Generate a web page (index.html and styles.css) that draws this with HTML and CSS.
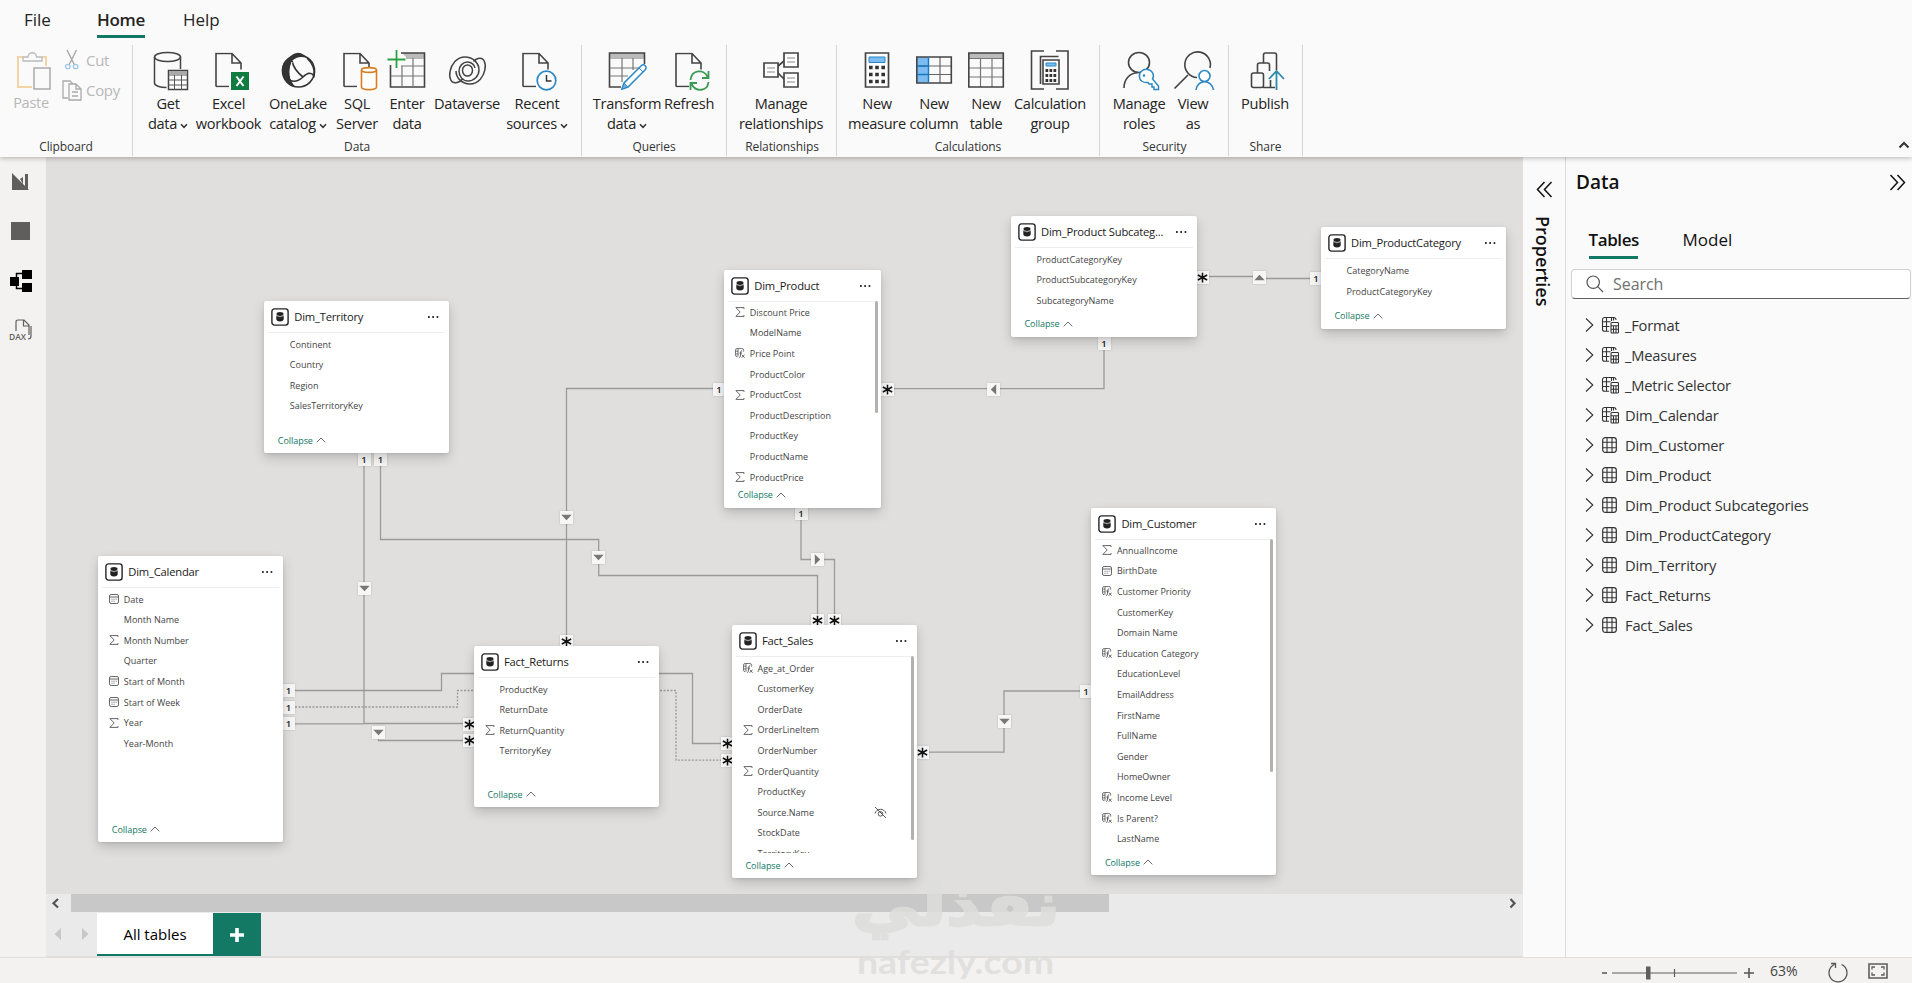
FILE: index.html
```html
<!DOCTYPE html>
<html lang="en">
<head>
<meta charset="utf-8">
<title>Model view</title>
<link rel="stylesheet" href="styles.css">
</head>
<body>
<svg class="defs" width="0" height="0">
  <symbol id="sum" viewBox="0 0 10 10"><path d="M9 2V.6H.9L5.2 5 .9 9.4H9V8" fill="none" stroke="#555" stroke-width=".9"/></symbol>
  <symbol id="cal" viewBox="0 0 10 10"><rect x=".5" y=".5" width="9" height="9" rx="1.6" fill="none" stroke="#555" stroke-width=".9"/><path d="M.5 3h9M2.5 5.2h1M4.6 5.2h1M6.7 5.2h1M2.5 7.2h1M4.6 7.2h1" stroke="#555" stroke-width=".9"/></symbol>
  <symbol id="fx" viewBox="0 0 11 11"><path d="M2.5 9.5A2 2 0 0 1 .5 7.500V2.500A2 2 0 0 1 2.500.5h5a2 2 0 0 1 2 2V4M3.300.5v9M.5 3.500h3M.5 6.500h3" fill="none" stroke="#555" stroke-width=".9"/><path d="M8 3.200C6.600 2.800 6.400 3.800 6.300 5l-.5 4.500c-.1 1-.8 1-1.300.8M4.800 5.600h3M7.500 7.300l3 3.400M10.600 7.300l-3.200 3.400" fill="none" stroke="#444" stroke-width=".9"/></symbol>
  <symbol id="db" viewBox="0 0 18 18"><rect x=".9" y=".9" width="16.200" height="16.200" rx="2.500" fill="#fff" stroke="#252423" stroke-width="1.400"/><ellipse cx="9" cy="6" rx="3.500" ry="1.900" fill="#222"/><path d="M5.300 7.600q3.700 2.200 7.400 0v3.400a3.700 2.500 0 0 1-7.400 0z" fill="#222"/><path d="M5.500 8q3.500 1.800 7 0" stroke="#999" stroke-width=".6" fill="none"/></symbol>
  <symbol id="up" viewBox="0 0 10 6"><path d="M.7 5.300 5 1l4.300 4.300" fill="none" stroke="#444" stroke-width=".8"/></symbol>
  <symbol id="down" viewBox="0 0 8 6"><path d="M1 1.200 4 4.300l3-3.100" fill="none" stroke="#333" stroke-width="1.500"/></symbol>
  <symbol id="right" viewBox="0 0 9 16"><path d="M1 1.500 7.800 8 1 14.500" fill="none" stroke="#333" stroke-width="1.100"/></symbol>
  <symbol id="grid" viewBox="0 0 18 18"><rect x="1.700" y="1.700" width="13.600" height="14.600" rx="2.500" fill="none" stroke="#333" stroke-width="1.200"/><path d="M6 1.700v14.600M11 1.700v14.600M1.700 6.300h13.600M1.700 11.700h13.600" stroke="#333" stroke-width="1.100"/></symbol>
  <symbol id="gridcalc" viewBox="0 0 18 18"><path d="M8 15.300H3.500a2 2 0 0 1-2-2V3.500a2 2 0 0 1 2-2h9a2.300 2.300 0 0 1 2.500 2.500M5.500 1.500v13.800M10.500 1.500v3.500M1.500 5.800h8M1.500 10.500h7M12.500 1.500v3" fill="none" stroke="#333" stroke-width="1.100"/><rect x="10" y="6.500" width="7.500" height="10.500" rx="1" fill="#fff" stroke="#333" stroke-width="1.100"/><path d="M10 9.800h7.500M10 13.300h7.500M12.500 9.800V17M15 9.800V17" stroke="#333" stroke-width="1.100"/></symbol>
  <symbol id="page" viewBox="0 0 27 35"><path d="M1 34V1h16l9 9.500V17M17 1v9.500h9M1 34h13" fill="none" stroke="#444" stroke-width="1.600"/></symbol>
</svg>

<header class="ribbon">
  <nav class="tabs"><span class="tab tab-file">File</span><span class="tab tab-on">Home</span><span class="tab tab-help">Help</span></nav>
  <div class="groups">
    <section class="group g-clip">
      <div class="tools">
        <div class="paste"><svg width="36" height="40" viewBox="0 0 36 40"><path d="M7 6H2v30h14M26 6h4v9" fill="none" stroke="#f3d4a4" stroke-width="2"/><path d="M7 10V6h5a4.200 4.200 0 0 1 8.500 0H26v4z" fill="#fafafa" stroke="#bbb" stroke-width="1.300"/><path d="M18 17h16v21H18z" fill="#fafafa" stroke="#aaa" stroke-width="1.500"/></svg><span>Paste</span></div>
        <div class="cutcopy">
          <div class="mini"><svg width="22" height="22" viewBox="0 0 22 22"><path d="M6 1l7.500 15M15.500 1 8 16" stroke="#aaa" stroke-width="1.500"/><circle cx="6.800" cy="17.500" r="2.200" fill="none" stroke="#9cc8e6" stroke-width="1.300"/><circle cx="14.600" cy="17.500" r="2.200" fill="none" stroke="#9cc8e6" stroke-width="1.300"/></svg><span>Cut</span></div>
          <div class="mini"><svg width="22" height="22" viewBox="0 0 22 22"><path d="M7 19H2V2h7l3 3M8 5h7l5 5v11H8zM15 5v5h5M11 13h6M11 17h6" fill="none" stroke="#aaa" stroke-width="1.300"/></svg><span>Copy</span></div>
        </div>
      </div>
      <h6>Clipboard</h6>
    </section>

    <section class="group g-data">
      <div class="tools">
        <div class="btn" style="width:60px"><svg viewBox="0 0 42 42"><g fill="none" stroke="#444" stroke-width="1.500"><ellipse cx="19.500" cy="7" rx="13" ry="4.500"/><path d="M6.500 7v26c0 2.500 5 4.500 12 4.500M32.500 7v12"/></g><path d="M20.500 20.500h19v19h-19z" fill="#fff" stroke="#444" stroke-width="1.500"/><path d="M21 21h18v3H21z" fill="#aaa"/><path d="M20.500 25h19M20.500 30h19M20.500 35h19M26.500 25v15M33.500 25v15" stroke="#555"/></svg><span>Get<br>data<svg class="dd"><use href="#down"/></svg></span></div>
        <div class="btn" style="width:61px"><svg viewBox="0 0 42 42"><use href="#page" x="6" y="2.500" width="27" height="35"/><rect x="22" y="22" width="18" height="18" fill="#107c41"/><path d="M27.500 26.500l7 9.500M34.500 26.500l-7 9.500" stroke="#fff" stroke-width="2"/></svg><span>Excel<br>workbook</span></div>
        <div class="btn" style="width:78px"><svg viewBox="0 0 42 42"><path d="M10 9Q18-1 26 5l3 3q-9-3-15 3L12 17q-2 11 5 20Q5 33 4 22 3 13 10 9z" fill="#333"/><g fill="none" stroke="#333" stroke-width="1.600"><circle cx="20.500" cy="21" r="16"/><path d="M14 11q2 9 11 16M29 8q9 9 7 18-4-6-11 1-9 8-16 1"/></g><path d="M14 12q-3 10-1 17" stroke="#fff" fill="none"/></svg><span>OneLake<br>catalog<svg class="dd"><use href="#down"/></svg></span></div>
        <div class="btn" style="width:40px"><svg viewBox="0 0 42 42"><use href="#page" x="6" y="2.500" width="27" height="35"/><path d="M24.500 20v17c0 3.500 15 3.500 15 0V20" fill="#fff" stroke="#d67f22" stroke-width="1.600"/><ellipse cx="32" cy="20" rx="7.500" ry="2.400" fill="#fff" stroke="#d67f22" stroke-width="1.600"/></svg><span>SQL<br>Server</span></div>
        <div class="btn" style="width:60px"><svg viewBox="0 0 42 42"><path d="M15 3h22v4H19z" fill="#bbb"/><path d="M14 3h23.500v34h-34V15" fill="none" stroke="#444" stroke-width="1.600"/><path d="M19 8h18M14 16h23M4 26h33M15 16v21M26 8v29" stroke="#777" stroke-width="1.200" fill="none"/><path d="M9.500 0v18M.5 9.500h18" stroke="#2ea043" stroke-width="1.800"/></svg><span>Enter<br>data</span></div>
        <div class="btn" style="width:60px"><svg viewBox="0 0 42 42"><g fill="none" stroke="#444" stroke-width="1.500"><ellipse cx="20.500" cy="20.500" rx="5" ry="5.500"/><path d="M10 32.500C-2 36 1 7 18 7c8 0 14 6 14 13 0 6-5 11-11 11-5.500 0-9-5-9-10 0-5 4-9 8.500-9 4 0 7 3 7.500 6M31 8.500c12-3.500 9 25.500-8 25.500-8 0-14-6-14-13"/><path d="M10 32.500q4-1 5.500-3.500M31 8.500q-3 1-4.500 3"/></g></svg><span>Dataverse</span></div>
        <div class="btn" style="width:80px"><svg viewBox="0 0 42 42"><use href="#page" x="5" y="2.500" width="27" height="35"/><circle cx="29.500" cy="30.500" r="9.300" fill="#fff" stroke="#2b88c4" stroke-width="1.700"/><path d="M29.500 25v6h5" fill="none" stroke="#333" stroke-width="1.500"/></svg><span>Recent<br>sources<svg class="dd"><use href="#down"/></svg></span></div>
      </div>
      <h6>Data</h6>
    </section>

    <section class="group g-query">
      <div class="tools">
        <div class="btn" style="width:74px"><svg viewBox="0 0 42 42"><path d="M3 3h34v4H3z" fill="#bbb"/><path d="M37.500 14V3h-35v34H14" fill="none" stroke="#444" stroke-width="1.600"/><path d="M3 8h34M3 18h29M3 26h18M15 8v24M26 8v12" stroke="#777" stroke-width="1.200"/><path d="M15 39l2-6 17-17c3-3 7 1 4 4L21 37z" fill="#fff" stroke="#2b88c4" stroke-width="1.500"/><path d="M15 39l2-6 4 4z" fill="#6cb2e8" stroke="#2b88c4"/><path d="M32 18l4 4" stroke="#2b88c4"/></svg><span>Transform<br>data<svg class="dd"><use href="#down"/></svg></span></div>
        <div class="btn" style="width:50px"><svg viewBox="0 0 42 42"><use href="#page" x="6" y="2.500" width="27" height="35"/><g fill="none" stroke="#3a9a52" stroke-width="1.800"><path d="M21.500 30c1-11 14-11 17-3M39.500 21v7H33M39.500 32c-1 10-13 10-17 2M21.500 40v-7H28"/></g></svg><span>Refresh</span></div>
      </div>
      <h6>Queries</h6>
    </section>

    <section class="group g-rel">
      <div class="tools">
        <div class="btn" style="width:90px"><svg viewBox="0 0 42 42"><g fill="#fff" stroke="#444" stroke-width="1.700"><path d="M16 17l8-7M16 22l8 8"/><path d="M3 13h14v14H3zM23 3h14v14H23zM23 23h14v14H23z"/></g><path d="M6 18h8M6 22h8M26 8h8M26 12h8M26 28h8M26 32h8" stroke="#888" stroke-width="1.200"/></svg><span>Manage<br>relationships</span></div>
      </div>
      <h6>Relationships</h6>
    </section>

    <section class="group g-calc">
      <div class="tools">
        <div class="btn" style="width:58px"><svg viewBox="0 0 42 42"><path d="M8.500 3h23v34h-23z" fill="#fff" stroke="#444" stroke-width="1.700"/><path d="M12 7h16v5.500H12z" fill="#7dbcf0" stroke="#2b88c4"/><path d="M12 17.500h16M12 24.500h16M12 31.500h16" stroke="#333" stroke-width="3.600" stroke-dasharray="3.600 2.600"/></svg><span>New<br>measure</span></div>
        <div class="btn" style="width:56px"><svg viewBox="0 0 42 42"><path d="M3 7h12v26H3z" fill="#7dbcf0"/><path d="M3 16h34M3 24.500h34M26 7v26" stroke="#666" stroke-width="1.200"/><path d="M2.800 7h34.500v26H2.800z" fill="none" stroke="#444" stroke-width="1.600"/><path d="M14.500 7v26M3 16h11M3 24.500h11" stroke="#1a78c2" stroke-width="1.400"/></svg><span>New<br>column</span></div>
        <div class="btn" style="width:48px"><svg viewBox="0 0 42 42"><path d="M3 3h34v5H3z" fill="#bbb"/><path d="M3 8.500h34M3 18h34M3 27h34M14.500 8v29M26 8v29" stroke="#777" stroke-width="1.200"/><path d="M2.800 3h34.500v34H2.800z" fill="none" stroke="#444" stroke-width="1.600"/></svg><span>New<br>table</span></div>
        <div class="btn" style="width:80px"><svg viewBox="0 0 42 42"><g fill="none" stroke="#444" stroke-width="1.600"><path d="M14 1H1.500v38H14M26 1h12v38H26M10.500 34V6.500h18"/><path d="M13 10h16v24H13z"/></g><path d="M16 13h10v3H16z" fill="#7dbcf0" stroke="#2b88c4"/><path d="M15.500 20.500h11M15.500 25.500h11M15.500 30.500h11" stroke="#333" stroke-width="3" stroke-dasharray="2.700 1.300"/></svg><span>Calculation<br>group</span></div>
      </div>
      <h6>Calculations</h6>
    </section>

    <section class="group g-sec">
      <div class="tools">
        <div class="btn" style="width:60px"><svg viewBox="0 0 42 42"><g fill="none" stroke="#444" stroke-width="1.600"><ellipse cx="20" cy="12.500" rx="10.500" ry="10"/><path d="M5 38c0-9 6-15 14-15.500"/></g><path d="M20.500 27a7 6.500 0 1 1 13 2l6 7v3.500H35V37h-2v-3h-3l-1-1.500c-5 .5-8.500-2-8.500-5.500z" fill="#fff" stroke="#2b88c4" stroke-width="1.500"/><circle cx="25" cy="25.500" r="1.300" fill="#2b88c4"/></svg><span>Manage<br>roles</span></div>
        <div class="btn" style="width:48px"><svg viewBox="0 0 42 42"><g fill="none" stroke="#444" stroke-width="1.600"><path d="M24 27.500A12.800 12.800 0 1 1 37 18M15 25 1.500 38.500"/></g><g fill="#fff" stroke="#2b88c4" stroke-width="1.600"><circle cx="31.500" cy="26" r="5.500"/><path d="M23 40c1-11 16-11 17.500 0"/></g></svg><span>View<br>as</span></div>
      </div>
      <h6>Security</h6>
    </section>

    <section class="group g-share">
      <div class="tools">
        <div class="btn" style="width:60px"><svg viewBox="0 0 42 42"><g fill="none" stroke="#444" stroke-width="1.600"><rect x="6.500" y="23" width="12" height="14.500" rx="2"/><path d="M12.500 23V15q0-2 2-2h8q2 0 2 2v6M18.500 13V5q0-2 2-2h9q2 0 2 2v15M18 37.500h12M25.500 30v7"/></g><path d="M31.500 40V22M24 29l7.500-8 7.500 8" fill="none" stroke="#2b88a8" stroke-width="1.800"/></svg><span>Publish</span></div>
      </div>
      <h6>Share</h6>
    </section>
    <svg class="fold" width="12" height="8" viewBox="0 0 12 8"><path d="M1.500 6.500 6 2l4.500 4.500" fill="none" stroke="#333" stroke-width="2"/></svg>
  </div>
</header>

<main class="body">
  <aside class="rail">
    <svg width="22" height="22" viewBox="0 0 22 22"><path d="M2 2v17h17zM15 3h3v15l-3-3zM10 8l3-2v7z" fill="#605e5c"/></svg>
    <svg width="22" height="22" viewBox="0 0 22 22"><path d="M1 2h19v18H1z" fill="#605e5c"/></svg>
    <svg width="22" height="22" viewBox="0 0 22 22"><path d="M0 7h9v9H0zM12 0h10v9H12zM12 13h10v9H12z" fill="#000"/><path d="M13 3.500H6.500v15H13" fill="none" stroke="#000" stroke-width="1.500"/></svg>
    <svg class="daxico" width="24" height="22" viewBox="0 0 24 22"><path d="M7 12V3q0-2 2-2h6l5 5v10M14.500 1v6H20M22 7v10q0 3-3 3" fill="none" stroke="#605e5c" stroke-width="1.200"/><text x="0" y="20.500" textLength="17" lengthAdjust="spacingAndGlyphs" class="dax">DAX</text></svg>
  </aside>

  <section class="work">
    <div class="canvas">
      <svg class="wires" width="1477" height="737" viewBox="46 157 1477 737">
        <g fill="none" stroke="#9b9a99" stroke-width="1.300">
          <path d="M364 460V723.500H469M378.500 732V740.500H469M380.500 460V539.500H598.700V575.500H817.500V620M801 513V559.500H834.500V620M719 388.500H566.500V641M887 388.700H1104V343M1202 276.500H1259M1259 278.500H1316M288 690.500H441.500V673.500H692.500V743.500H727M288 723.800H364M922 752.200H1004V691H1086"/>
          <path d="M288 707H457.500V690.500H676V760.200H727" stroke-dasharray="2 1.500"/>
        </g>
      </svg>
      <div class="pins">
        <b class="pin" style="left:318px;top:302.500px">1</b><b class="pin" style="left:334.500px;top:302.500px">1</b>
        <b class="pin" style="left:755px;top:356.500px">1</b><b class="pin" style="left:673px;top:232px">1</b>
        <b class="pin" style="left:1058px;top:186px">1</b><b class="pin" style="left:1270px;top:121.500px">1</b>
        <b class="pin" style="left:242.500px;top:533.500px">1</b><b class="pin" style="left:242.500px;top:550px">1</b><b class="pin" style="left:242.500px;top:566.500px">1</b>
        <b class="pin" style="left:1040px;top:534px">1</b>
        <b class="pin" style="left:520.700px;top:484px"><svg><use href="#star"/></svg></b>
        <b class="pin" style="left:423px;top:567px"><svg><use href="#star"/></svg></b><b class="pin" style="left:423px;top:583.500px"><svg><use href="#star"/></svg></b>
        <b class="pin" style="left:681.300px;top:586.500px"><svg><use href="#star"/></svg></b><b class="pin" style="left:681.300px;top:603px"><svg><use href="#star"/></svg></b>
        <b class="pin" style="left:771.500px;top:463px"><svg><use href="#star"/></svg></b><b class="pin" style="left:788.300px;top:463px"><svg><use href="#star"/></svg></b>
        <b class="pin" style="left:841px;top:232px"><svg><use href="#star"/></svg></b><b class="pin" style="left:1156px;top:120px"><svg><use href="#star"/></svg></b>
        <b class="pin" style="left:876.500px;top:595px"><svg><use href="#star"/></svg></b>
        <b class="pin" style="left:318px;top:431.500px"><svg><use href="#tri"/></svg></b><b class="pin" style="left:332.700px;top:575px"><svg><use href="#tri"/></svg></b>
        <b class="pin" style="left:552.700px;top:400.500px"><svg><use href="#tri"/></svg></b><b class="pin" style="left:520.500px;top:360.500px"><svg><use href="#tri"/></svg></b>
        <b class="pin" style="left:958px;top:564px"><svg><use href="#tri"/></svg></b>
        <b class="pin pin-e" style="left:771.300px;top:402.500px"><svg><use href="#tri"/></svg></b>
        <b class="pin pin-w" style="left:947px;top:232px"><svg><use href="#tri"/></svg></b>
        <b class="pin pin-n" style="left:1213px;top:120.500px"><svg><use href="#tri"/></svg></b>
      </div>
      <svg class="defs" width="0" height="0">
        <symbol id="star" viewBox="0 0 12 12"><path d="M6 1.500v9M1.700 3.700l8.600 4.600M10.300 3.700 1.700 8.300" stroke="#111" stroke-width="1.400"/></symbol>
        <symbol id="tri" viewBox="0 0 12 12"><path d="M1.200 3.500h9.600L6 8.500z" fill="#797775"/></symbol>
      </svg>

      <article class="card" style="left:218.300px;top:144px;width:184.500px;height:152px">
        <header><svg><use href="#db"/></svg><h4>Dim_Territory</h4><i class="dots"></i></header>
        <ul><li>Continent</li><li>Country</li><li>Region</li><li>SalesTerritoryKey</li></ul>
        <footer>Collapse<svg><use href="#up"/></svg></footer>
      </article>

      <article class="card" style="left:52.300px;top:399px;width:185px;height:286px">
        <header><svg><use href="#db"/></svg><h4>Dim_Calendar</h4><i class="dots"></i></header>
        <ul><li><svg><use href="#cal"/></svg>Date</li><li>Month Name</li><li><svg><use href="#sum"/></svg>Month Number</li><li>Quarter</li><li><svg><use href="#cal"/></svg>Start of Month</li><li><svg><use href="#cal"/></svg>Start of Week</li><li><svg><use href="#sum"/></svg>Year</li><li>Year-Month</li></ul>
        <footer>Collapse<svg><use href="#up"/></svg></footer>
      </article>

      <article class="card" style="left:428px;top:489px;width:185px;height:161px">
        <header><svg><use href="#db"/></svg><h4>Fact_Returns</h4><i class="dots"></i></header>
        <ul><li>ProductKey</li><li>ReturnDate</li><li><svg><use href="#sum"/></svg>ReturnQuantity</li><li>TerritoryKey</li></ul>
        <footer>Collapse<svg><use href="#up"/></svg></footer>
      </article>

      <article class="card" style="left:686px;top:468px;width:185px;height:253px">
        <header><svg><use href="#db"/></svg><h4>Fact_Sales</h4><i class="dots"></i></header>
        <ul><li><svg><use href="#fx"/></svg>Age_at_Order</li><li>CustomerKey</li><li>OrderDate</li><li><svg><use href="#sum"/></svg>OrderLineItem</li><li>OrderNumber</li><li><svg><use href="#sum"/></svg>OrderQuantity</li><li>ProductKey</li><li>Source.Name<svg class="eye" viewBox="0 0 13 13"><path d="M1 1l11 11M1 7.500C2 4.500 4 3.300 6.500 3.300S11 4.500 12 7.500" fill="none" stroke="#444" stroke-width=".9"/><circle cx="6.500" cy="7.800" r="2.300" fill="none" stroke="#444" stroke-width=".9"/></svg></li><li>StockDate</li><li>TerritoryKey</li></ul>
        <footer>Collapse<svg><use href="#up"/></svg></footer>
        <i class="bar" style="height:184px"></i>
      </article>

      <article class="card tight" style="left:678.300px;top:113px;width:157.200px;height:237.500px">
        <header><svg><use href="#db"/></svg><h4>Dim_Product</h4><i class="dots"></i></header>
        <ul><li><svg><use href="#sum"/></svg>Discount Price</li><li>ModelName</li><li><svg><use href="#fx"/></svg>Price Point</li><li>ProductColor</li><li><svg><use href="#sum"/></svg>ProductCost</li><li>ProductDescription</li><li>ProductKey</li><li>ProductName</li><li><svg><use href="#sum"/></svg>ProductPrice</li></ul>
        <footer>Collapse<svg><use href="#up"/></svg></footer>
        <i class="bar" style="height:112px"></i>
      </article>

      <article class="card" style="left:965px;top:59.300px;width:185.500px;height:120.500px">
        <header><svg><use href="#db"/></svg><h4>Dim_Product Subcateg...</h4><i class="dots"></i></header>
        <ul><li>ProductCategoryKey</li><li>ProductSubcategoryKey</li><li>SubcategoryName</li></ul>
        <footer>Collapse<svg><use href="#up"/></svg></footer>
      </article>

      <article class="card" style="left:1275px;top:70.400px;width:185px;height:101.500px">
        <header><svg><use href="#db"/></svg><h4>Dim_ProductCategory</h4><i class="dots"></i></header>
        <ul><li>CategoryName</li><li>ProductCategoryKey</li></ul>
        <footer>Collapse<svg><use href="#up"/></svg></footer>
      </article>

      <article class="card tight" style="left:1045.400px;top:351px;width:185px;height:367px">
        <header><svg><use href="#db"/></svg><h4>Dim_Customer</h4><i class="dots"></i></header>
        <ul><li><svg><use href="#sum"/></svg>AnnualIncome</li><li><svg><use href="#cal"/></svg>BirthDate</li><li><svg><use href="#fx"/></svg>Customer Priority</li><li>CustomerKey</li><li>Domain Name</li><li><svg><use href="#fx"/></svg>Education Category</li><li>EducationLevel</li><li>EmailAddress</li><li>FirstName</li><li>FullName</li><li>Gender</li><li>HomeOwner</li><li><svg><use href="#fx"/></svg>Income Level</li><li><svg><use href="#fx"/></svg>Is Parent?</li><li>LastName</li></ul>
        <footer>Collapse<svg><use href="#up"/></svg></footer>
        <i class="bar" style="height:233px"></i>
      </article>
    </div>
    <div class="scroll"><svg width="25" height="18" viewBox="0 0 25 18"><path d="M12 5 7.500 9.200l4.500 4.300" fill="none" stroke="#555" stroke-width="2.200"/></svg><i class="thumb"></i><svg class="end" width="20" height="18" viewBox="0 0 20 18"><path d="M7.500 5 11.500 9.200l-4 4.300" fill="none" stroke="#555" stroke-width="2.200"/></svg></div>
    <div class="sheets"><svg width="51" height="45" viewBox="0 0 51 45"><path d="M15 16v12l-6.500-6zM36 16v12l6.500-6z" fill="#c8c8c8"/></svg><span class="sheet">All tables</span><span class="add"><svg width="14" height="14" viewBox="0 0 14 14"><path d="M7 0v14M0 7h14" stroke="#fff" stroke-width="3.600"/></svg></span></div>
  </section>

  <aside class="props"><svg width="17" height="17" viewBox="0 0 17 17"><path d="M8.500 1 1.500 8.500l7 7.500M15.500 1l-7 7.500 7 7.500" fill="none" stroke="#111" stroke-width="1.500"/></svg><span>Properties</span></aside>

  <aside class="data">
    <div class="data-head"><h2>Data</h2><svg width="17" height="17" viewBox="0 0 17 17"><path d="M1.500 1l7 7.500-7 7.500M8.500 1l7 7.500-7 7.500" fill="none" stroke="#111" stroke-width="1.500"/></svg></div>
    <div class="data-tabs"><span class="dt on">Tables</span><span class="dt">Model</span></div>
    <div class="search"><svg width="18" height="18" viewBox="0 0 18 18"><circle cx="7.200" cy="7.200" r="6.200" fill="none" stroke="#555" stroke-width="1.200"/><path d="M11.700 11.700 17 17" stroke="#555" stroke-width="1.200"/></svg>Search</div>
    <ul class="tree">
      <li><svg class="chev"><use href="#right"/></svg><svg class="ico"><use href="#gridcalc"/></svg>_Format</li>
      <li><svg class="chev"><use href="#right"/></svg><svg class="ico"><use href="#gridcalc"/></svg>_Measures</li>
      <li><svg class="chev"><use href="#right"/></svg><svg class="ico"><use href="#gridcalc"/></svg>_Metric Selector</li>
      <li><svg class="chev"><use href="#right"/></svg><svg class="ico"><use href="#gridcalc"/></svg>Dim_Calendar</li>
      <li><svg class="chev"><use href="#right"/></svg><svg class="ico"><use href="#grid"/></svg>Dim_Customer</li>
      <li><svg class="chev"><use href="#right"/></svg><svg class="ico"><use href="#grid"/></svg>Dim_Product</li>
      <li><svg class="chev"><use href="#right"/></svg><svg class="ico"><use href="#grid"/></svg>Dim_Product Subcategories</li>
      <li><svg class="chev"><use href="#right"/></svg><svg class="ico"><use href="#grid"/></svg>Dim_ProductCategory</li>
      <li><svg class="chev"><use href="#right"/></svg><svg class="ico"><use href="#grid"/></svg>Dim_Territory</li>
      <li><svg class="chev"><use href="#right"/></svg><svg class="ico"><use href="#grid"/></svg>Fact_Returns</li>
      <li><svg class="chev"><use href="#right"/></svg><svg class="ico"><use href="#grid"/></svg>Fact_Sales</li>
    </ul>
  </aside>
</main>

<footer class="status">
  <svg width="160" height="24" viewBox="0 0 160 24"><path d="M3 14h5M145 14h10M150 9v10" stroke="#555" stroke-width="1.600"/><path d="M13 14h125M75.500 10v8" stroke="#605e5c" stroke-width="1.200"/><path d="M47 7.500h4.500v13H47z" fill="#605e5c"/></svg>
  <span class="pct">63%</span>
  <svg class="reset" width="22" height="22" viewBox="0 0 22 22"><path d="M7.500 3.500a9 9 0 1 0 7 0M4 2.500h4.500V7" fill="none" stroke="#555" stroke-width="1.300"/></svg>
  <svg width="20" height="16" viewBox="0 0 20 16"><path d="M1 1h18v14H1z" fill="none" stroke="#605e5c" stroke-width="1.600"/><path d="M4 6.500V4h3M13 4h3v2.500M16 9.500V12h-3M7 12H4V9.500" fill="none" stroke="#605e5c" stroke-width="1.300"/></svg>
</footer>

<svg class="mark" width="230" height="120" viewBox="840 863 230 120">
  <text x="852" y="925" textLength="208" lengthAdjust="spacingAndGlyphs" class="mark-ar">نفذلي</text>
  <text x="857" y="974" textLength="197" lengthAdjust="spacingAndGlyphs" class="mark-en">nafezly.com</text>
</svg>
</body>
</html>
```
FILE: styles.css
```css
* { box-sizing: border-box; }
body { margin: 0; width: 1912px; height: 983px; overflow: hidden; display: flex; flex-direction: column; position: relative; background: #fafafa; color: #252423; font-family: "Open Sans", "Noto Sans", sans-serif; }
h2, h4, h6, ul { margin: 0; padding: 0; list-style: none; }
svg { display: block; flex: none; }
.defs { position: absolute; }

/* Ribbon */
.ribbon { height: 157px; flex: none; background: #fafafa; box-shadow: 0 1px 5px rgba(0,0,0,.28); position: relative; z-index: 3; }
.tabs { display: flex; height: 45px; padding-left: 24px; font-size: 17px; line-height: 39px; }
.tab { height: 38px; white-space: nowrap; }
.tab-file { width: 73px; }
.tab-on { width: 48px; font-weight: 600; letter-spacing: -.3px; border-bottom: 3px solid #117865; }
.tab-help { margin-left: 38px; }
.groups { display: flex; height: 111px; }
.group { display: flex; flex-direction: column; height: 111px; border-right: 1px solid #d4d4d4; }
.g-clip { width: 133px; }
.g-data { width: 449px; padding-left: 5px; }
.g-query { width: 145px; padding-left: 8px; }
.g-rel { width: 110px; padding-left: 9px; }
.g-calc { width: 263px; padding-left: 11px; }
.g-sec { width: 129px; padding-left: 9px; }
.g-share { width: 74px; padding-left: 6px; }
.tools { display: flex; height: 94px; }
.group h6 { font-size: 12px; font-weight: 400; line-height: 18px; text-align: center; letter-spacing: -.1px; color: #333; }
.g-data h6 { padding-right: 5px; }
.g-query h6, .g-rel h6, .g-sec h6 { padding-right: 8px; }
.g-calc h6 { padding-right: 11px; }
.g-share h6 { padding-right: 6px; }
.btn { display: flex; flex-direction: column; align-items: center; padding-top: 5px; font-size: 14.600px; letter-spacing: -.300px; line-height: 20px; text-align: center; white-space: nowrap; }
.btn > svg { width: 42px; height: 42px; margin-left: 2px; }
.btn > span { margin-top: 1px; }
.btn .dd { display: inline-block; width: 8px; height: 6px; margin-left: 3px; }
.paste { width: 62px; padding: 6px 0 0 0; color: #b8b8b8; font-size: 14.600px; letter-spacing: -.3px; line-height: 20px; display: flex; flex-direction: column; align-items: center; }
.paste svg { margin-left: 5px; }
.paste span { margin-top: 1px; }
.mini { display: flex; align-items: center; height: 30px; color: #b8b8b8; font-size: 15px; letter-spacing: -.3px; }
.mini svg { margin-right: 3px; margin-left: -1px; }
.fold { margin: 96px 2px 0 auto; }

/* Body columns */
.body { display: flex; height: 800px; flex: none; }
.rail { width: 46px; background: #f3f2f1; padding: 14px 0 0 11px; display: flex; flex-direction: column; gap: 27.300px; }
.rail svg { margin-left: -1px; }
.rail .daxico { margin-left: -2px; }
.dax { font: 600 8.500px "Open Sans", sans-serif; fill: #605e5c; }
.work { width: 1477px; display: flex; flex-direction: column; }
.canvas { position: relative; height: 737px; background: #e0dfde; overflow: hidden; }
.wires { position: absolute; left: 0; top: 0; }
.pins { position: absolute; left: 0; top: 0; }
.pin { position: absolute; width: 13px; height: 13px; margin: -6.500px 0 0 -6.500px; background: #f6f6f6; box-shadow: 0 0 2px rgba(0,0,0,.18); font-size: 9.500px; font-weight: 600; line-height: 13px; text-align: center; color: #222; }
.pin svg { width: 13px; height: 13px; }
.pin-e svg { transform: rotate(-90deg); }
.pin-w svg { transform: rotate(90deg); }
.pin-n svg { transform: rotate(180deg); }

.card { position: absolute; background: #fff; border-radius: 2px; box-shadow: 0 5px 12px rgba(0,0,0,.17), 0 1px 3px rgba(0,0,0,.1); display: flex; flex-direction: column; }
.card header { height: 32px; flex: none; margin: 0 4px; padding: 0 6px 0 3px; border-bottom: 1px solid #eeeeee; display: flex; align-items: center; }
.card header svg { width: 18px; height: 18px; margin-right: 5px; }
.card h4 { flex: 1; font-size: 11.200px; letter-spacing: -.200px; font-weight: 400; white-space: nowrap; color: #1b1a19; }
.dots { width: 11px; height: 2px; background: radial-gradient(circle at 1px 1px, #333 .9px, transparent 1.200px) 0 0 / 4.300px 2px; }
.card ul { flex: 1; min-height: 0; overflow: hidden; padding-top: .8px; }
.tight ul { padding-top: 0; }
.card li { position: relative; display: flex; align-items: center; height: 20.600px; padding-left: 25.500px; font-size: 9px; color: #444; white-space: nowrap; }
.card li svg { width: 10px; height: 10px; margin-left: -14.500px; margin-right: 4.500px; }
.card li .eye { width: 13px; height: 13px; margin: 0 30px 0 auto; }
.card footer { height: 25px; flex: none; display: flex; align-items: center; gap: 3.500px; padding: 0 0 1px 13.500px; font-size: 9px; letter-spacing: -.05px; color: #117865; }
.card footer svg { width: 10px; height: 6px; }
.bar { position: absolute; right: 3px; top: 31px; width: 3px; background: #b3b0ad; border-radius: 2px; }

.scroll { height: 18px; background: #eaeaea; display: flex; }
.thumb { width: 1038px; background: #c8c8c8; }
.end { margin-left: auto; }
.sheets { height: 45px; background: #eaeaea; display: flex; border-bottom: 1px solid #e0dfde; }
.sheet { width: 116px; margin-top: 1px; background: #fff; border-bottom: 2px solid #117865; text-align: center; font-size: 15px; line-height: 43px; font-weight: 500; color: #000; }
.add { width: 48px; margin-top: 1px; background: #137864; display: flex; align-items: center; justify-content: center; }

/* Side panes */
.props { width: 43px; border-right: 1px solid #dcdcdc; background: #fafafa; display: flex; flex-direction: column; padding: 24px 0 0 13px; }
.props span { writing-mode: vertical-rl; align-self: flex-start; margin: 18px 0 0 -6px; font-size: 18px; font-weight: 600; line-height: 26px; color: #111; }
.data { width: 346px; background: #fafafa; }
.data-head { display: flex; justify-content: space-between; align-items: center; height: 50px; padding: 0 6px 0 10px; }
.data h2 { font-size: 19px; font-weight: 600; color: #111; }
.data-tabs { display: flex; gap: 45px; padding: 16px 0 0 22.500px; height: 62px; font-size: 17px; line-height: 33px; color: #111; }
.dt { height: 36px; white-space: nowrap; }
.on { width: 49px; font-weight: 600; letter-spacing: -.4px; border-bottom: 3px solid #117865; }
.search { display: flex; align-items: center; gap: 9px; height: 30px; margin: 0 1px 0 5px; padding-left: 14px; background: #fff; border: 1px solid #d1d1d1; border-bottom-color: #616161; border-radius: 4px; font-size: 16px; letter-spacing: -.05px; color: #707070; }
.tree { padding-top: 11px; }
.tree li { display: flex; align-items: center; height: 30px; padding-left: 19px; font-size: 14.700px; letter-spacing: -.200px; white-space: nowrap; color: #333; }
.chev { width: 9px; height: 16px; margin-right: 7px; }
.ico { width: 18px; height: 18px; margin-right: 6px; }

/* Status bar */
.status { height: 26px; flex: none; display: flex; align-items: center; padding-left: 1599px; background: #f3f2f1; border-top: 1px solid #e0dfde; color: #444; font-size: 14px; }
.pct { width: 57px; margin-left: 11px; white-space: nowrap; }
.reset { margin-right: 19px; margin-top: 3px; }

/* Watermark over the lower canvas edge */
.mark { position: absolute; left: 840px; top: 863px; z-index: 5; fill: #dededd; opacity: .85; }
.mark-ar { font: 700 58px "DejaVu Sans", sans-serif; stroke: #dededd; stroke-width: 2.500px; }
.mark-en { font: 700 32px "Lato", sans-serif; }
```
